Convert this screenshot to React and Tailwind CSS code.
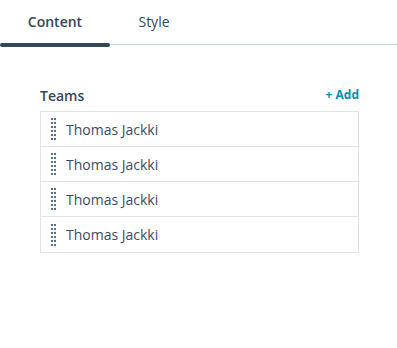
import React from 'react';

const members = ['Thomas Jackki', 'Thomas Jackki', 'Thomas Jackki', 'Thomas Jackki'];

const DragHandle = () => (
    <div className="grid grid-cols-2 gap-x-px gap-y-[2px] w-[5px] shrink-0">
        {Array.from({ length: 12 }).map((_, i) => (
            <span key={i} className="block w-[2px] h-[2px] bg-[#516f90]" />
        ))}
    </div>
);

export default function App() {
    return (
        <div className="w-[397px] h-[348px] bg-white text-[#33475b]" style={{ fontFamily: '"Open Sans", sans-serif' }}>
            {/* Tabs */}
            <div className="relative flex h-[45px] border-b border-[#cbd6e2]">
                <button type="button" className="relative w-[110px] text-[14px] font-semibold pb-[2px]">
                    Content
                    <span className="absolute left-0 right-0 bottom-[-3px] h-[4px] rounded-full bg-[#33475b]" />
                </button>
                <button type="button" className="w-[88px] text-[14px] pb-[2px]">Style</button>
            </div>

            <div className="px-[40px] pt-[39px] w-[399px]">
                <div className="flex items-center justify-between h-[22px] mb-[5px]">
                    <span className="text-[14px] font-semibold">Teams</span>
                    <button type="button" className="text-[12px] font-bold text-[#0091ae]">+ Add</button>
                </div>
                <div className="border border-[#dfe3eb]">
                    {members.map((name, i) => (
                        <div
                            key={i}
                            className="flex items-center gap-[10px] h-[35px] pl-[10px] border-b border-[#dfe3eb] last:border-b-0"
                        >
                            <DragHandle />
                            <span className="text-[14px] text-[#3d4a66]">{name}</span>
                        </div>
                    ))}
                </div>
            </div>
        </div>
    );
}
